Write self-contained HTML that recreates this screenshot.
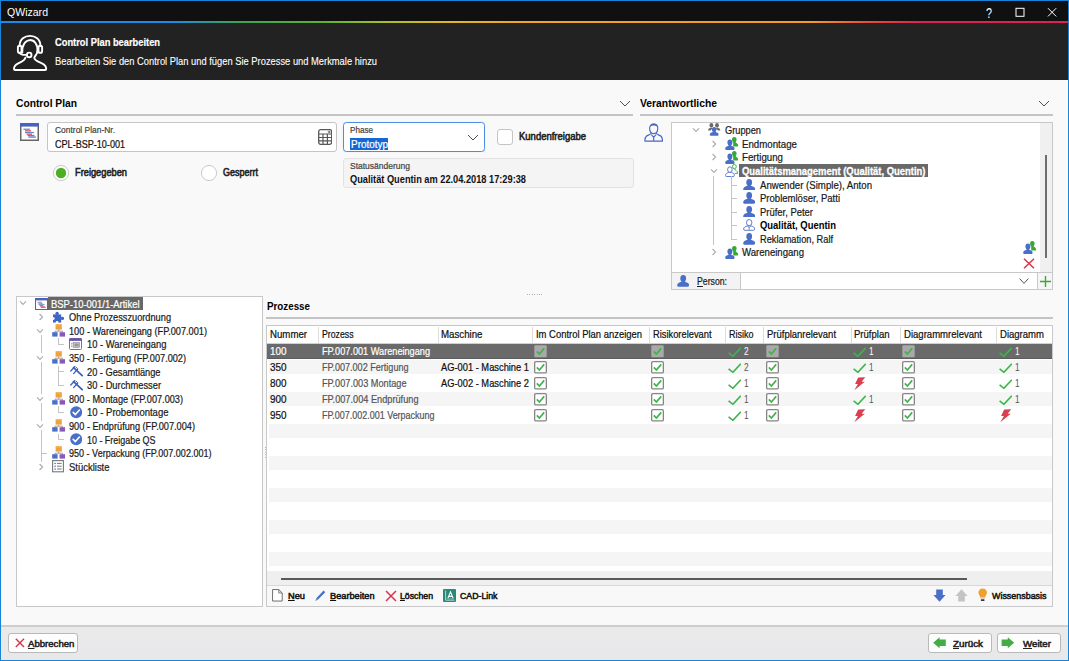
<!DOCTYPE html>
<html><head><meta charset="utf-8"><title>QWizard</title>
<style>
html,body{margin:0;padding:0;}
body{width:1069px;height:661px;overflow:hidden;position:relative;background:#f9f9f9;font-family:"Liberation Sans",sans-serif;}
.a{position:absolute;display:block;}
.t{position:absolute;display:block;white-space:nowrap;line-height:16px;height:16px;transform-origin:0 50%;}
.t u{text-decoration:underline;text-underline-offset:0.5px;text-decoration-thickness:1px;}
</style></head><body>
<div class="a" style="left:0px;top:0px;width:1069px;height:661px;background:#1883d7;"></div>
<div class="a" style="left:1px;top:1px;width:1066.8px;height:21px;background:#101010;"></div>
<div class="a" style="left:1px;top:21px;width:1066.8px;height:2px;background:linear-gradient(90deg,#1e8ae6 0%,#1e8ae6 16%,#3aa35a 22%,#5fb030 30%,#a8bf2a 36%,#e0b628 42%,#f2a32a 50%,#f29a2c 76%,#e8503a 81%,#dc2450 86%,#dc2450 100%);"></div>
<div class="a" style="left:1px;top:23px;width:1066.8px;height:57px;background:#222222;"></div>
<div class="a" style="left:1px;top:80px;width:1066.8px;height:546px;background:#f9f9f9;"></div>
<div class="a" style="left:1px;top:625.3px;width:1066.8px;height:1.7px;background:#cecece;"></div>
<div class="a" style="left:1px;top:627px;width:1066.8px;height:32.7px;background:linear-gradient(#eaeaea,#e8e8ea);"></div>
<span class="t" style="left:7px;top:3.50px;font-size:11.3px;color:#ffffff;transform:scaleX(0.9330);">QWizard</span>
<span class="t" style="left:985.6px;top:4.60px;font-size:15px;color:#ffffff;transform:scaleX(0.7193);">?</span>
<svg class="a" style="left:1015px;top:7px;" width="10" height="10" viewBox="0 0 10 10" preserveAspectRatio="none"><rect x="1" y="1.3" width="8" height="8" fill="none" stroke="#fff" stroke-width="1"/></svg>
<svg class="a" style="left:1047px;top:7px;" width="10" height="10" viewBox="0 0 10 10" preserveAspectRatio="none"><path d="M1 1.2L9.2 9.4M9.2 1.2L1 9.4" stroke="#fff" stroke-width="1" fill="none"/></svg>
<svg class="a" style="left:5px;top:28px;" width="50" height="50" viewBox="0 0 50 50" preserveAspectRatio="none"><g fill="none" stroke="#fff" stroke-width="1.9" stroke-linecap="round" stroke-linejoin="round">
<path d="M14.6 17.8 C14.6 4.5 35.4 4.5 35.4 17.8"/>
<rect x="12.9" y="17.8" width="3.6" height="7" rx="1.6"/>
<rect x="33.5" y="17.8" width="3.6" height="7" rx="1.6"/>
<path d="M17.3 24.6 C16.4 8 33.6 8 32.6 24"/>
<path d="M15 25 C15.6 27 18 27 21.6 26.9"/>
<circle cx="24.2" cy="26.9" r="2.3"/>
<path d="M32.6 22.5 C32.6 26 30 27.5 29.3 29.8 C29.6 32.5 33 33.6 37 35.4 C40 36.8 41.2 38.5 41.2 41 C41.2 41.7 40.8 42 40 42 L10.2 42 C9.4 42 9 41.7 9 41 C9 38.5 10.2 36.8 13.2 35.4 C17 33.6 20 32.5 20.4 29.6"/>
</g></svg>
<span class="t" style="left:55px;top:34.00px;font-size:10.5px;font-weight:700;color:#ffffff;transform:scaleX(0.8866);-webkit-text-stroke:0.2px #ffffff;">Control Plan bearbeiten</span>
<span class="t" style="left:55px;top:53.00px;font-size:10.5px;color:#ffffff;transform:scaleX(0.8898);-webkit-text-stroke:0.1px #ffffff;">Bearbeiten Sie den Control Plan und fügen Sie Prozesse und Merkmale hinzu</span>
<span class="t" style="left:16px;top:95.00px;font-size:11px;font-weight:700;color:#000;transform:scaleX(0.9329);">Control Plan</span>
<div class="a" style="left:16px;top:114px;width:617px;height:1.5px;background:#c4c4c4;"></div>
<svg class="a" style="left:619px;top:100px;" width="12" height="7" viewBox="0 0 12 7" preserveAspectRatio="none"><path d="M1 1L6 6L11 1" fill="none" stroke="#505050" stroke-width="1"/></svg>
<svg class="a" style="left:20px;top:123px;" width="19" height="18" viewBox="0 0 19 18" preserveAspectRatio="none"><rect x="0" y="0" width="19" height="18" fill="#666"/><rect x="0" y="0" width="19" height="3.6" fill="#4463c9"/><rect x="1.5" y="3.6" width="16" height="12.9" fill="#fff"/>
<rect x="3.4" y="5.6" width="6.5" height="1.3" fill="#5b8fd8"/><rect x="5" y="7.2" width="6" height="1.3" fill="#e05060"/><rect x="5" y="8.9" width="9" height="1.3" fill="#5b8fd8"/><rect x="6.6" y="10.5" width="5.4" height="1.3" fill="#e05060"/><rect x="7.6" y="11.9" width="6.8" height="1.2" fill="#e05060"/><rect x="8.4" y="13.4" width="7.4" height="1.3" fill="#5b78c8"/></svg>
<div class="a" style="left:47px;top:122px;width:290px;height:30px;background:#fff;border:1px solid #c4c4c4;box-sizing:border-box;border-radius:3px;"></div>
<span class="t" style="left:55px;top:121.50px;font-size:9px;color:#444;transform:scaleX(0.9372);-webkit-text-stroke:0.22px #444;">Control Plan-Nr.</span>
<span class="t" style="left:55px;top:135.50px;font-size:10.5px;color:#111;transform:scaleX(0.8629);-webkit-text-stroke:0.22px #111;">CPL-BSP-10-001</span>
<svg class="a" style="left:318px;top:129px;" width="14.4" height="16" viewBox="0 0 14.4 16" preserveAspectRatio="none"><rect x="0.7" y="0.7" width="13" height="14.6" rx="2" fill="#fff" stroke="#585858" stroke-width="1.3"/><g stroke="#585858" stroke-width="1.2" fill="none"><path d="M0.7 5H13.7M0.7 8.5H13.7M0.7 11.9H13.7M5 5V15.3M9.4 5V15.3"/></g><path d="M9.8 3H12.6M11.2 1.7V4.3" stroke="#585858" stroke-width="0.9"/></svg>
<div class="a" style="left:343px;top:122px;width:142px;height:30px;background:#fff;border:1.2px solid #4a90e2;box-sizing:border-box;border-radius:3.5px;box-shadow:0 0 1px 0 #c0d8f4;"></div>
<span class="t" style="left:350px;top:121.50px;font-size:9px;color:#444;transform:scaleX(0.9013);-webkit-text-stroke:0.22px #444;">Phase</span>
<div class="a" style="left:350px;top:137.8px;width:38px;height:11.8px;background:#1467d6;"></div>
<span class="t" style="left:350.5px;top:136.00px;font-size:10.5px;color:#fff;transform:scaleX(0.9463);-webkit-text-stroke:0.22px #fff;">Prototyp</span>
<svg class="a" style="left:467px;top:134px;" width="12" height="7" viewBox="0 0 12 7" preserveAspectRatio="none"><path d="M1 1L6 6L11 1" fill="none" stroke="#505050" stroke-width="1"/></svg>
<div class="a" style="left:497px;top:129px;width:16px;height:16px;background:#fff;border:1px solid #c4c4c4;box-sizing:border-box;border-radius:3px;"></div>
<span class="t" style="left:518.5px;top:129.00px;font-size:10.3px;color:#222;transform:scaleX(0.9212);-webkit-text-stroke:0.57px #222;">Kundenfreigabe</span>
<svg class="a" style="left:52px;top:164px;" width="18" height="18" viewBox="0 0 18 18" preserveAspectRatio="none"><circle cx="9" cy="9" r="7.6" fill="#fff" stroke="#cacaca" stroke-width="1"/><circle cx="9" cy="9" r="5.2" fill="#4db024"/></svg>
<span class="t" style="left:74.5px;top:165.00px;font-size:10.3px;color:#222;transform:scaleX(0.8992);-webkit-text-stroke:0.57px #222;">Freigegeben</span>
<svg class="a" style="left:199.5px;top:164px;" width="18" height="18" viewBox="0 0 18 18" preserveAspectRatio="none"><circle cx="9" cy="9" r="7.6" fill="#fff" stroke="#cacaca" stroke-width="1"/></svg>
<span class="t" style="left:222.5px;top:165.00px;font-size:10.3px;color:#222;transform:scaleX(0.8736);-webkit-text-stroke:0.57px #222;">Gesperrt</span>
<div class="a" style="left:343px;top:158px;width:291px;height:30px;background:#f4f4f4;border:1px solid #e2e2e2;box-sizing:border-box;border-radius:3px;"></div>
<span class="t" style="left:350px;top:157.50px;font-size:9px;color:#444;transform:scaleX(0.9442);-webkit-text-stroke:0.22px #444;">Statusänderung</span>
<span class="t" style="left:350px;top:172.00px;font-size:10.3px;font-weight:700;color:#111;transform:scaleX(0.8964);">Qualität Quentin am 22.04.2018 17:29:38</span>
<span class="t" style="left:640px;top:95.00px;font-size:11px;font-weight:700;color:#000;transform:scaleX(0.9401);">Verantwortliche</span>
<div class="a" style="left:640px;top:114px;width:413px;height:1.5px;background:#c4c4c4;"></div>
<svg class="a" style="left:1038px;top:100px;" width="12" height="7" viewBox="0 0 12 7" preserveAspectRatio="none"><path d="M1 1L6 6L11 1" fill="none" stroke="#505050" stroke-width="1"/></svg>
<svg class="a" style="left:644px;top:121.6px;" width="19.4" height="21" viewBox="0 0 22 22" preserveAspectRatio="none"><g fill="none" stroke="#4a67c8" stroke-width="1.3" stroke-linejoin="round"><path d="M6.4 6.6C6.4 0.8 15.6 0.8 15.6 6.6C15.6 9.6 14 12.2 11 12.2C8 12.2 6.4 9.6 6.4 6.6Z"/><path d="M8.2 11.6 C7.6 13.4 4.6 13.6 2.8 14.8 C1.4 15.8 1 17.6 1 20 L21 20 C21 17.6 20.6 15.8 19.2 14.8 C17.4 13.6 14.4 13.4 13.8 11.6"/><path d="M8.4 13.2L11 16.2L13.6 13.2M11 16.2V20"/></g><path d="M6.8 4.6C7.6 0.6 14.4 0.6 15.2 4.6C12.6 3.4 9.4 3.4 6.8 4.6Z" fill="#4a67c8"/></svg>
<div class="a" style="left:671px;top:122px;width:382px;height:168px;background:#fff;border:1px solid #c8c8c8;box-sizing:border-box;"></div>
<div class="a" style="left:1040px;top:123px;width:12px;height:149px;background:#f0f0f0;"></div>
<div class="a" style="left:1045px;top:155px;width:2px;height:103px;background:#6e6e6e;"></div>
<svg class="a" style="left:692px;top:127.19999999999999px;" width="8" height="6" viewBox="0 0 8 6" preserveAspectRatio="none"><path d="M1 1.4L4 4.4L7 1.4" fill="none" stroke="#ababab" stroke-width="1.1"/></svg>
<svg class="a" style="left:708px;top:123.2px;" width="12.6" height="13" viewBox="0 0 12.6 13" preserveAspectRatio="none"><g fill="#6a6a6a"><ellipse cx="3.4" cy="2.3" rx="1.9" ry="2.2"/><ellipse cx="9" cy="2.3" rx="1.9" ry="2.2"/><path d="M0 7.4C0 5.4 1.6 5 3 4.4L4.6 5.2L2.4 7.6Z"/><path d="M12.4 7.4C12.4 5.4 10.8 5 9.4 4.4L7.8 5.2L10 7.6Z"/></g><g fill="#4a6fc8"><ellipse cx="6.2" cy="6.6" rx="2.3" ry="2.6"/><rect x="5" y="8" width="2.4" height="2.2"/><path d="M1.8 11.7C1.8 9.9 3.2 9.7 5 9.1L7.4 9.1C9.2 9.7 10.6 9.9 10.6 11.7C10.6 12.4 10.2 12.7 9.5 12.7L2.9 12.7C2.2 12.7 1.8 12.4 1.8 11.7Z"/></g></svg>
<span class="t" style="left:724.5px;top:122.20px;font-size:10.5px;color:#1a1a1a;transform:scaleX(0.8811);-webkit-text-stroke:0.22px #1a1a1a;">Gruppen</span>
<svg class="a" style="left:710.5px;top:139.78px;" width="6" height="8" viewBox="0 0 6 8" preserveAspectRatio="none"><path d="M1.6 1L4.6 4L1.6 7" fill="none" stroke="#ababab" stroke-width="1.1"/></svg>
<svg class="a" style="left:725px;top:136.98px;" width="13.5" height="13" viewBox="0 0 13.5 13" preserveAspectRatio="none"><g fill="#35a935"><ellipse cx="9.3" cy="2.7" rx="2.3" ry="2.6"/><path d="M8.2 4.6L10.4 4.6C10.6 6.4 13.2 6.4 13.2 8.6C13.2 9.3 12.8 9.6 12.2 9.6L8.2 9.6Z"/></g><g fill="#4a6fc8"><ellipse cx="4.9" cy="5.4" rx="2.5" ry="3"/><rect x="3.6" y="7" width="2.6" height="2.4"/><path d="M0.2 11.8C0.2 9.7 1.8 9.4 3.6 8.7L6.2 8.7C8 9.4 9.6 9.7 9.6 11.8C9.6 12.6 9.1 13 8.3 13L1.5 13C0.7 13 0.2 12.6 0.2 11.8Z"/></g></svg>
<span class="t" style="left:741.5px;top:135.78px;font-size:10.5px;color:#1a1a1a;transform:scaleX(0.9237);-webkit-text-stroke:0.22px #1a1a1a;">Endmontage</span>
<svg class="a" style="left:710.5px;top:153.35999999999999px;" width="6" height="8" viewBox="0 0 6 8" preserveAspectRatio="none"><path d="M1.6 1L4.6 4L1.6 7" fill="none" stroke="#ababab" stroke-width="1.1"/></svg>
<svg class="a" style="left:725px;top:150.55999999999997px;" width="13.5" height="13" viewBox="0 0 13.5 13" preserveAspectRatio="none"><g fill="#35a935"><ellipse cx="9.3" cy="2.7" rx="2.3" ry="2.6"/><path d="M8.2 4.6L10.4 4.6C10.6 6.4 13.2 6.4 13.2 8.6C13.2 9.3 12.8 9.6 12.2 9.6L8.2 9.6Z"/></g><g fill="#4a6fc8"><ellipse cx="4.9" cy="5.4" rx="2.5" ry="3"/><rect x="3.6" y="7" width="2.6" height="2.4"/><path d="M0.2 11.8C0.2 9.7 1.8 9.4 3.6 8.7L6.2 8.7C8 9.4 9.6 9.7 9.6 11.8C9.6 12.6 9.1 13 8.3 13L1.5 13C0.7 13 0.2 12.6 0.2 11.8Z"/></g></svg>
<span class="t" style="left:741.5px;top:149.36px;font-size:10.5px;color:#1a1a1a;transform:scaleX(0.9244);-webkit-text-stroke:0.22px #1a1a1a;">Fertigung</span>
<svg class="a" style="left:709.5px;top:167.94px;" width="8" height="6" viewBox="0 0 8 6" preserveAspectRatio="none"><path d="M1 1.4L4 4.4L7 1.4" fill="none" stroke="#ababab" stroke-width="1.1"/></svg>
<svg class="a" style="left:725px;top:164.14px;" width="13.5" height="13" viewBox="0 0 13.5 13" preserveAspectRatio="none"><g fill="#fff" stroke-width="0.9" stroke-linejoin="round"><g stroke="#35a935"><ellipse cx="9.4" cy="2.6" rx="1.9" ry="2.1"/><path d="M9.6 4.8C10 6.6 12.6 6.4 12.6 9.4L9.6 9.4"/></g><g stroke="#4a6fc8"><path d="M0.5 11.6C0.5 9.6 1.6 9.2 3.4 8.4L6.4 8.4C8.2 9.2 9.3 9.6 9.3 11.6C9.3 12.3 8.9 12.5 8.3 12.5L1.5 12.5C0.9 12.5 0.5 12.3 0.5 11.6Z"/><ellipse cx="4.9" cy="5.6" rx="2.3" ry="2.8"/></g></g></svg>
<div class="a" style="left:738.5px;top:164px;width:189px;height:12.8px;background:#686868;"></div>
<span class="t" style="left:741.5px;top:162.94px;font-size:10.5px;font-weight:700;color:#fff;transform:scaleX(0.8987);-webkit-text-stroke:0.3px #fff;">Qualitätsmanagement (Qualität, Quentin)</span>
<div class="a" style="left:713px;top:176px;width:1px;height:69px;background:#c4c4c4;"></div>
<div class="a" style="left:731px;top:176px;width:1px;height:63px;background:#c4c4c4;"></div>
<div class="a" style="left:731px;top:185px;width:6px;height:1px;background:#c4c4c4;"></div>
<svg class="a" style="left:743px;top:178.51999999999998px;" width="12.4" height="11.8" viewBox="0 0 12.4 11.8" preserveAspectRatio="none"><g fill="#4a6fc8"><ellipse cx="6.2" cy="3.4" rx="2.9" ry="3.4"/><rect x="4.6" y="5" width="3.2" height="3"/><path d="M0.2 10.3C0.2 7.9 2.2 7.5 4.6 6.7L7.8 6.7C10.2 7.5 12.2 7.9 12.2 10.3C12.2 11.3 11.5 11.8 10.5 11.8L1.9 11.8C0.9 11.8 0.2 11.3 0.2 10.3Z"/></g></svg>
<span class="t" style="left:759.5px;top:176.52px;font-size:10.5px;color:#1a1a1a;transform:scaleX(0.9182);-webkit-text-stroke:0.22px #1a1a1a;">Anwender (Simple), Anton</span>
<div class="a" style="left:731px;top:198px;width:6px;height:1px;background:#c4c4c4;"></div>
<svg class="a" style="left:743px;top:192.1px;" width="12.4" height="11.8" viewBox="0 0 12.4 11.8" preserveAspectRatio="none"><g fill="#4a6fc8"><ellipse cx="6.2" cy="3.4" rx="2.9" ry="3.4"/><rect x="4.6" y="5" width="3.2" height="3"/><path d="M0.2 10.3C0.2 7.9 2.2 7.5 4.6 6.7L7.8 6.7C10.2 7.5 12.2 7.9 12.2 10.3C12.2 11.3 11.5 11.8 10.5 11.8L1.9 11.8C0.9 11.8 0.2 11.3 0.2 10.3Z"/></g></svg>
<span class="t" style="left:759.5px;top:190.10px;font-size:10.5px;color:#1a1a1a;transform:scaleX(0.9079);-webkit-text-stroke:0.22px #1a1a1a;">Problemlöser, Patti</span>
<div class="a" style="left:731px;top:212px;width:6px;height:1px;background:#c4c4c4;"></div>
<svg class="a" style="left:743px;top:205.68px;" width="12.4" height="11.8" viewBox="0 0 12.4 11.8" preserveAspectRatio="none"><g fill="#4a6fc8"><ellipse cx="6.2" cy="3.4" rx="2.9" ry="3.4"/><rect x="4.6" y="5" width="3.2" height="3"/><path d="M0.2 10.3C0.2 7.9 2.2 7.5 4.6 6.7L7.8 6.7C10.2 7.5 12.2 7.9 12.2 10.3C12.2 11.3 11.5 11.8 10.5 11.8L1.9 11.8C0.9 11.8 0.2 11.3 0.2 10.3Z"/></g></svg>
<span class="t" style="left:759.5px;top:203.68px;font-size:10.5px;color:#1a1a1a;transform:scaleX(0.8992);-webkit-text-stroke:0.22px #1a1a1a;">Prüfer, Peter</span>
<div class="a" style="left:731px;top:225px;width:6px;height:1px;background:#c4c4c4;"></div>
<svg class="a" style="left:743px;top:219.26px;" width="12.4" height="11.8" viewBox="0 0 12.4 11.8" preserveAspectRatio="none"><g fill="#fff" stroke="#4a6fc8" stroke-width="0.9" stroke-linejoin="round"><path d="M0.6 10.2C0.6 8 2.4 7.6 4.6 6.8L7.8 6.8C10 7.6 11.8 8 11.8 10.2C11.8 11 11.2 11.3 10.4 11.3L2 11.3C1.2 11.3 0.6 11 0.6 10.2Z"/><ellipse cx="6.2" cy="3.6" rx="2.7" ry="3.1"/><path d="M4.8 7L6.2 9L7.6 7M6.2 9V11.2" fill="none" stroke-width="0.7"/></g></svg>
<span class="t" style="left:759.5px;top:217.26px;font-size:10.5px;font-weight:700;color:#000;transform:scaleX(0.8986);">Qualität, Quentin</span>
<div class="a" style="left:731px;top:239px;width:6px;height:1px;background:#c4c4c4;"></div>
<svg class="a" style="left:743px;top:232.83999999999997px;" width="12.4" height="11.8" viewBox="0 0 12.4 11.8" preserveAspectRatio="none"><g fill="#4a6fc8"><ellipse cx="6.2" cy="3.4" rx="2.9" ry="3.4"/><rect x="4.6" y="5" width="3.2" height="3"/><path d="M0.2 10.3C0.2 7.9 2.2 7.5 4.6 6.7L7.8 6.7C10.2 7.5 12.2 7.9 12.2 10.3C12.2 11.3 11.5 11.8 10.5 11.8L1.9 11.8C0.9 11.8 0.2 11.3 0.2 10.3Z"/></g></svg>
<span class="t" style="left:759.5px;top:230.84px;font-size:10.5px;color:#1a1a1a;transform:scaleX(0.8810);-webkit-text-stroke:0.22px #1a1a1a;">Reklamation, Ralf</span>
<svg class="a" style="left:710.5px;top:248.42px;" width="6" height="8" viewBox="0 0 6 8" preserveAspectRatio="none"><path d="M1.6 1L4.6 4L1.6 7" fill="none" stroke="#ababab" stroke-width="1.1"/></svg>
<svg class="a" style="left:725px;top:245.61999999999998px;" width="13.5" height="13" viewBox="0 0 13.5 13" preserveAspectRatio="none"><g fill="#35a935"><ellipse cx="9.3" cy="2.7" rx="2.3" ry="2.6"/><path d="M8.2 4.6L10.4 4.6C10.6 6.4 13.2 6.4 13.2 8.6C13.2 9.3 12.8 9.6 12.2 9.6L8.2 9.6Z"/></g><g fill="#4a6fc8"><ellipse cx="4.9" cy="5.4" rx="2.5" ry="3"/><rect x="3.6" y="7" width="2.6" height="2.4"/><path d="M0.2 11.8C0.2 9.7 1.8 9.4 3.6 8.7L6.2 8.7C8 9.4 9.6 9.7 9.6 11.8C9.6 12.6 9.1 13 8.3 13L1.5 13C0.7 13 0.2 12.6 0.2 11.8Z"/></g></svg>
<span class="t" style="left:741.5px;top:244.42px;font-size:10.5px;color:#1a1a1a;transform:scaleX(0.9131);-webkit-text-stroke:0.22px #1a1a1a;">Wareneingang</span>
<svg class="a" style="left:1022.5px;top:241px;" width="13.5" height="13" viewBox="0 0 13.5 13" preserveAspectRatio="none"><g fill="#35a935"><ellipse cx="9.3" cy="2.7" rx="2.3" ry="2.6"/><path d="M8.2 4.6L10.4 4.6C10.6 6.4 13.2 6.4 13.2 8.6C13.2 9.3 12.8 9.6 12.2 9.6L8.2 9.6Z"/></g><g fill="#4a6fc8"><ellipse cx="4.9" cy="5.4" rx="2.5" ry="3"/><rect x="3.6" y="7" width="2.6" height="2.4"/><path d="M0.2 11.8C0.2 9.7 1.8 9.4 3.6 8.7L6.2 8.7C8 9.4 9.6 9.7 9.6 11.8C9.6 12.6 9.1 13 8.3 13L1.5 13C0.7 13 0.2 12.6 0.2 11.8Z"/></g></svg>
<svg class="a" style="left:1023px;top:258px;" width="12" height="11" viewBox="0 0 12 11" preserveAspectRatio="none"><path d="M1 0.8L11 10.2M11 0.8L1 10.2" stroke="#d8344a" stroke-width="1.5" fill="none"/></svg>
<div class="a" style="left:672px;top:272px;width:380px;height:1px;background:#c8c8c8;"></div>
<div class="a" style="left:672px;top:273px;width:68px;height:16px;background:#f3f3f3;"></div>
<div class="a" style="left:740px;top:273px;width:1px;height:16px;background:#c8c8c8;"></div>
<div class="a" style="left:1037px;top:273px;width:1px;height:16px;background:#c8c8c8;"></div>
<div class="a" style="left:1038px;top:273px;width:14px;height:16px;background:#f6f6f6;"></div>
<svg class="a" style="left:677px;top:274.8px;" width="12.4" height="11.8" viewBox="0 0 12.4 11.8" preserveAspectRatio="none"><g fill="#4a6fc8"><ellipse cx="6.2" cy="3.4" rx="2.9" ry="3.4"/><rect x="4.6" y="5" width="3.2" height="3"/><path d="M0.2 10.3C0.2 7.9 2.2 7.5 4.6 6.7L7.8 6.7C10.2 7.5 12.2 7.9 12.2 10.3C12.2 11.3 11.5 11.8 10.5 11.8L1.9 11.8C0.9 11.8 0.2 11.3 0.2 10.3Z"/></g></svg>
<span class="t" style="left:696.5px;top:273.00px;font-size:10.5px;color:#1a1a1a;transform:scaleX(0.8291);-webkit-text-stroke:0.22px #1a1a1a;"><u>P</u>erson:</span>
<svg class="a" style="left:1019px;top:277.6px;" width="10" height="6.4" viewBox="0 0 10 6.4" preserveAspectRatio="none"><path d="M0.6 0.6L5 5.4L9.4 0.6" fill="none" stroke="#505050" stroke-width="1"/></svg>
<svg class="a" style="left:1039px;top:275px;" width="13" height="13" viewBox="0 0 13 13" preserveAspectRatio="none"><path d="M6.5 1V12M1 6.5H12" stroke="#3aa83a" stroke-width="1.4" fill="none"/></svg>
<div class="a" style="left:527.0px;top:294px;width:1px;height:1px;background:#b0b0b0;"></div>
<div class="a" style="left:529.4px;top:294px;width:1px;height:1px;background:#b0b0b0;"></div>
<div class="a" style="left:531.8px;top:294px;width:1px;height:1px;background:#b0b0b0;"></div>
<div class="a" style="left:534.2px;top:294px;width:1px;height:1px;background:#b0b0b0;"></div>
<div class="a" style="left:536.6px;top:294px;width:1px;height:1px;background:#b0b0b0;"></div>
<div class="a" style="left:539.0px;top:294px;width:1px;height:1px;background:#b0b0b0;"></div>
<div class="a" style="left:541.4px;top:294px;width:1px;height:1px;background:#b0b0b0;"></div>
<div class="a" style="left:16px;top:296px;width:247px;height:311px;background:#fff;border:1px solid #c8c8c8;box-sizing:border-box;"></div>
<svg class="a" style="left:19.2px;top:300.20000000000005px;" width="8" height="6" viewBox="0 0 8 6" preserveAspectRatio="none"><path d="M1 1.4L4 4.4L7 1.4" fill="none" stroke="#ababab" stroke-width="1.1"/></svg>
<svg class="a" style="left:34.5px;top:297.8px;" width="13" height="12" viewBox="0 0 19 18" preserveAspectRatio="none"><rect x="0" y="0" width="19" height="18" fill="#666"/><rect x="0" y="0" width="19" height="3.6" fill="#4463c9"/><rect x="1.5" y="3.6" width="16" height="12.9" fill="#fff"/>
<rect x="3.4" y="5.6" width="6.5" height="1.3" fill="#5b8fd8"/><rect x="5" y="7.2" width="6" height="1.3" fill="#e05060"/><rect x="5" y="8.9" width="9" height="1.3" fill="#5b8fd8"/><rect x="6.6" y="10.5" width="5.4" height="1.3" fill="#e05060"/><rect x="7.6" y="11.9" width="6.8" height="1.2" fill="#e05060"/><rect x="8.4" y="13.4" width="7.4" height="1.3" fill="#5b78c8"/></svg>
<div class="a" style="left:47.5px;top:297px;width:95.5px;height:12.6px;background:#686868;"></div>
<span class="t" style="left:51px;top:295.60px;font-size:10.5px;color:#fff;transform:scaleX(0.8974);-webkit-text-stroke:0.22px #fff;">BSP-10-001/1-Artikel</span>
<div class="a" style="left:41px;top:335px;width:1px;height:18px;background:#c4c4c4;"></div>
<div class="a" style="left:41px;top:362px;width:1px;height:32px;background:#c4c4c4;"></div>
<div class="a" style="left:41px;top:403px;width:1px;height:18px;background:#c4c4c4;"></div>
<div class="a" style="left:41px;top:430px;width:1px;height:32px;background:#c4c4c4;"></div>
<div class="a" style="left:41px;top:453px;width:6px;height:1px;background:#c4c4c4;"></div>
<div class="a" style="left:58px;top:338px;width:1px;height:7px;background:#c4c4c4;"></div>
<div class="a" style="left:58px;top:344px;width:6px;height:1px;background:#c4c4c4;"></div>
<div class="a" style="left:58px;top:366px;width:1px;height:20px;background:#c4c4c4;"></div>
<div class="a" style="left:58px;top:371px;width:6px;height:1px;background:#c4c4c4;"></div>
<div class="a" style="left:58px;top:385px;width:6px;height:1px;background:#c4c4c4;"></div>
<div class="a" style="left:58px;top:406px;width:1px;height:7px;background:#c4c4c4;"></div>
<div class="a" style="left:58px;top:412px;width:6px;height:1px;background:#c4c4c4;"></div>
<div class="a" style="left:58px;top:434px;width:1px;height:6px;background:#c4c4c4;"></div>
<div class="a" style="left:58px;top:439px;width:6px;height:1px;background:#c4c4c4;"></div>
<svg class="a" style="left:37.6px;top:313.19px;" width="6" height="8" viewBox="0 0 6 8" preserveAspectRatio="none"><path d="M1.6 1L4.6 4L1.6 7" fill="none" stroke="#ababab" stroke-width="1.1"/></svg>
<svg class="a" style="left:52px;top:310.79px;" width="12.4" height="12.4" viewBox="0 0 12.4 12.4" preserveAspectRatio="none"><g fill="#3f66c6"><rect x="1" y="3.4" width="8.2" height="8.2"/><circle cx="5.1" cy="2.4" r="1.7"/><circle cx="10.4" cy="7.4" r="1.7"/></g><circle cx="1.2" cy="7.6" r="1.5" fill="#fff"/><circle cx="5.1" cy="11.4" r="1.4" fill="#fff"/></svg>
<span class="t" style="left:69px;top:309.19px;font-size:10.5px;color:#1a1a1a;transform:scaleX(0.8782);-webkit-text-stroke:0.22px #1a1a1a;">Ohne Prozesszuordnung</span>
<svg class="a" style="left:36.4px;top:327.98px;" width="8" height="6" viewBox="0 0 8 6" preserveAspectRatio="none"><path d="M1 1.4L4 4.4L7 1.4" fill="none" stroke="#ababab" stroke-width="1.1"/></svg>
<svg class="a" style="left:51.8px;top:323.98px;" width="13.4" height="12.8" viewBox="0 0 13.4 12.8" preserveAspectRatio="none"><path d="M6.7 5.4V7.2M2.9 8.4V7.2H10.5V8.4" fill="none" stroke="#8a8a8a" stroke-width="0.8"/><rect x="3.6" y="0.2" width="6.2" height="5.4" fill="#f0a03c"/><rect x="4.4" y="0.2" width="4.6" height="1.2" fill="#f5b860"/><rect x="0.2" y="8.2" width="5.4" height="4.4" fill="#4a6fc8"/><rect x="7.6" y="8.2" width="5.6" height="4.4" fill="#8a58b8"/></svg>
<span class="t" style="left:69px;top:322.78px;font-size:10.5px;color:#1a1a1a;transform:scaleX(0.8757);-webkit-text-stroke:0.22px #1a1a1a;">100 - Wareneingang (FP.007.001)</span>
<svg class="a" style="left:36.4px;top:355.16px;" width="8" height="6" viewBox="0 0 8 6" preserveAspectRatio="none"><path d="M1 1.4L4 4.4L7 1.4" fill="none" stroke="#ababab" stroke-width="1.1"/></svg>
<svg class="a" style="left:51.8px;top:351.16px;" width="13.4" height="12.8" viewBox="0 0 13.4 12.8" preserveAspectRatio="none"><path d="M6.7 5.4V7.2M2.9 8.4V7.2H10.5V8.4" fill="none" stroke="#8a8a8a" stroke-width="0.8"/><rect x="3.6" y="0.2" width="6.2" height="5.4" fill="#f0a03c"/><rect x="4.4" y="0.2" width="4.6" height="1.2" fill="#f5b860"/><rect x="0.2" y="8.2" width="5.4" height="4.4" fill="#4a6fc8"/><rect x="7.6" y="8.2" width="5.6" height="4.4" fill="#8a58b8"/></svg>
<span class="t" style="left:69px;top:349.96px;font-size:10.5px;color:#1a1a1a;transform:scaleX(0.8729);-webkit-text-stroke:0.22px #1a1a1a;">350 - Fertigung (FP.007.002)</span>
<svg class="a" style="left:36.4px;top:395.93px;" width="8" height="6" viewBox="0 0 8 6" preserveAspectRatio="none"><path d="M1 1.4L4 4.4L7 1.4" fill="none" stroke="#ababab" stroke-width="1.1"/></svg>
<svg class="a" style="left:51.8px;top:391.93px;" width="13.4" height="12.8" viewBox="0 0 13.4 12.8" preserveAspectRatio="none"><path d="M6.7 5.4V7.2M2.9 8.4V7.2H10.5V8.4" fill="none" stroke="#8a8a8a" stroke-width="0.8"/><rect x="3.6" y="0.2" width="6.2" height="5.4" fill="#f0a03c"/><rect x="4.4" y="0.2" width="4.6" height="1.2" fill="#f5b860"/><rect x="0.2" y="8.2" width="5.4" height="4.4" fill="#4a6fc8"/><rect x="7.6" y="8.2" width="5.6" height="4.4" fill="#8a58b8"/></svg>
<span class="t" style="left:69px;top:390.73px;font-size:10.5px;color:#1a1a1a;transform:scaleX(0.8733);-webkit-text-stroke:0.22px #1a1a1a;">800 - Montage (FP.007.003)</span>
<svg class="a" style="left:36.4px;top:423.11px;" width="8" height="6" viewBox="0 0 8 6" preserveAspectRatio="none"><path d="M1 1.4L4 4.4L7 1.4" fill="none" stroke="#ababab" stroke-width="1.1"/></svg>
<svg class="a" style="left:51.8px;top:419.11px;" width="13.4" height="12.8" viewBox="0 0 13.4 12.8" preserveAspectRatio="none"><path d="M6.7 5.4V7.2M2.9 8.4V7.2H10.5V8.4" fill="none" stroke="#8a8a8a" stroke-width="0.8"/><rect x="3.6" y="0.2" width="6.2" height="5.4" fill="#f0a03c"/><rect x="4.4" y="0.2" width="4.6" height="1.2" fill="#f5b860"/><rect x="0.2" y="8.2" width="5.4" height="4.4" fill="#4a6fc8"/><rect x="7.6" y="8.2" width="5.6" height="4.4" fill="#8a58b8"/></svg>
<span class="t" style="left:69px;top:417.91px;font-size:10.5px;color:#1a1a1a;transform:scaleX(0.8751);-webkit-text-stroke:0.22px #1a1a1a;">900 - Endprüfung (FP.007.004)</span>
<svg class="a" style="left:51.8px;top:446.29px;" width="13.4" height="12.8" viewBox="0 0 13.4 12.8" preserveAspectRatio="none"><path d="M6.7 5.4V7.2M2.9 8.4V7.2H10.5V8.4" fill="none" stroke="#8a8a8a" stroke-width="0.8"/><rect x="3.6" y="0.2" width="6.2" height="5.4" fill="#f0a03c"/><rect x="4.4" y="0.2" width="4.6" height="1.2" fill="#f5b860"/><rect x="0.2" y="8.2" width="5.4" height="4.4" fill="#4a6fc8"/><rect x="7.6" y="8.2" width="5.6" height="4.4" fill="#8a58b8"/></svg>
<span class="t" style="left:69px;top:445.09px;font-size:10.5px;color:#1a1a1a;transform:scaleX(0.8606);-webkit-text-stroke:0.22px #1a1a1a;">950 - Verpackung (FP.007.002.001)</span>
<svg class="a" style="left:69.4px;top:338.37px;" width="13" height="12" viewBox="0 0 13 12" preserveAspectRatio="none"><rect x="0.5" y="0.5" width="12" height="11" rx="1" fill="#fff" stroke="#777" stroke-width="1"/><rect x="0.3" y="0.3" width="12.4" height="2.6" fill="#6a4fb4"/><rect x="4.6" y="4.6" width="6" height="4.8" fill="#c8c8c8" stroke="#888" stroke-width="0.6"/><path d="M2.2 5.4H3.6M2.2 7H3.6M2.2 8.6H3.6M5.6 6.2H9.6M5.6 7.8H9.6" stroke="#666" stroke-width="0.7"/></svg>
<span class="t" style="left:87px;top:336.37px;font-size:10.5px;color:#1a1a1a;transform:scaleX(0.8942);-webkit-text-stroke:0.22px #1a1a1a;">10 - Wareneingang</span>
<svg class="a" style="left:69.6px;top:365.95px;" width="13" height="11" viewBox="0 0 13 11" preserveAspectRatio="none"><g fill="none" stroke="#3c60bc" stroke-linecap="round"><path d="M3.6 1.6L12.2 9.6" stroke-width="1.8"/><path d="M4.7 0.7L0.8 5" stroke-width="1.3"/><path d="M7.7 3L3.6 7.6" stroke-width="1.3"/><path d="M6 1.2L7.2 2.2" stroke-width="1"/></g></svg>
<span class="t" style="left:87px;top:363.55px;font-size:10.5px;color:#1a1a1a;transform:scaleX(0.8807);-webkit-text-stroke:0.22px #1a1a1a;">20 - Gesamtlänge</span>
<svg class="a" style="left:69.6px;top:379.53999999999996px;" width="13" height="11" viewBox="0 0 13 11" preserveAspectRatio="none"><g fill="none" stroke="#3c60bc" stroke-linecap="round"><path d="M3.6 1.6L12.2 9.6" stroke-width="1.8"/><path d="M4.7 0.7L0.8 5" stroke-width="1.3"/><path d="M7.7 3L3.6 7.6" stroke-width="1.3"/><path d="M6 1.2L7.2 2.2" stroke-width="1"/></g></svg>
<span class="t" style="left:87px;top:377.14px;font-size:10.5px;color:#1a1a1a;transform:scaleX(0.8869);-webkit-text-stroke:0.22px #1a1a1a;">30 - Durchmesser</span>
<svg class="a" style="left:70px;top:406.12000000000006px;" width="12.4" height="12.4" viewBox="0 0 12.4 12.4" preserveAspectRatio="none"><circle cx="6.2" cy="6.2" r="6" fill="#4a6fc8"/><path d="M3.2 6.4L5.4 8.6L9.4 4" fill="none" stroke="#fff" stroke-width="1.6" stroke-linecap="round" stroke-linejoin="round"/></svg>
<span class="t" style="left:87px;top:404.32px;font-size:10.5px;color:#1a1a1a;transform:scaleX(0.9067);-webkit-text-stroke:0.22px #1a1a1a;">10 - Probemontage</span>
<svg class="a" style="left:70px;top:433.3px;" width="12.4" height="12.4" viewBox="0 0 12.4 12.4" preserveAspectRatio="none"><circle cx="6.2" cy="6.2" r="6" fill="#4a6fc8"/><path d="M3.2 6.4L5.4 8.6L9.4 4" fill="none" stroke="#fff" stroke-width="1.6" stroke-linecap="round" stroke-linejoin="round"/></svg>
<span class="t" style="left:87px;top:431.50px;font-size:10.5px;color:#1a1a1a;transform:scaleX(0.8506);-webkit-text-stroke:0.22px #1a1a1a;">10 - Freigabe QS</span>
<svg class="a" style="left:37.6px;top:462.68px;" width="6" height="8" viewBox="0 0 6 8" preserveAspectRatio="none"><path d="M1.6 1L4.6 4L1.6 7" fill="none" stroke="#ababab" stroke-width="1.1"/></svg>
<svg class="a" style="left:52.2px;top:460.48px;" width="12" height="12.4" viewBox="0 0 12 12.4" preserveAspectRatio="none"><rect x="0.6" y="0.6" width="10.8" height="11.2" fill="#fff" stroke="#777" stroke-width="1.1"/><g fill="#4a6fc8"><rect x="2.4" y="2.8" width="1.4" height="1.3"/><rect x="2.4" y="5.6" width="1.4" height="1.3"/><rect x="2.4" y="8.4" width="1.4" height="1.3"/></g><path d="M5 3.4H9.6M5 6.2H9.6M5 9H9.6" stroke="#666" stroke-width="0.9"/></svg>
<span class="t" style="left:69px;top:458.68px;font-size:10.5px;color:#1a1a1a;transform:scaleX(0.9014);-webkit-text-stroke:0.22px #1a1a1a;">Stückliste</span>
<div class="a" style="left:264.5px;top:447.0px;width:1px;height:1px;background:#b8b8b8;"></div>
<div class="a" style="left:264.5px;top:449.4px;width:1px;height:1px;background:#b8b8b8;"></div>
<div class="a" style="left:264.5px;top:451.8px;width:1px;height:1px;background:#b8b8b8;"></div>
<div class="a" style="left:264.5px;top:454.2px;width:1px;height:1px;background:#b8b8b8;"></div>
<div class="a" style="left:264.5px;top:456.6px;width:1px;height:1px;background:#b8b8b8;"></div>
<span class="t" style="left:266.5px;top:298.00px;font-size:11px;font-weight:700;color:#000;transform:scaleX(0.8902);">Prozesse</span>
<div class="a" style="left:266px;top:317px;width:787px;height:1.5px;background:#c4c4c4;"></div>
<div class="a" style="left:266px;top:325px;width:787px;height:282px;background:#fff;border:1px solid #c8c8c8;box-sizing:border-box;"></div>
<div class="a" style="left:267px;top:326px;width:785px;height:17px;background:#fff;"></div>
<div class="a" style="left:268.5px;top:359.9px;width:783.5px;height:14.4px;background:#f5f5f5;"></div>
<div class="a" style="left:268.5px;top:391.9px;width:783.5px;height:14.4px;background:#f5f5f5;"></div>
<div class="a" style="left:268.5px;top:423.9px;width:783.5px;height:14.4px;background:#f5f5f5;"></div>
<div class="a" style="left:268.5px;top:455.9px;width:783.5px;height:14.4px;background:#f5f5f5;"></div>
<div class="a" style="left:268.5px;top:487.9px;width:783.5px;height:14.4px;background:#f5f5f5;"></div>
<div class="a" style="left:268.5px;top:519.9px;width:783.5px;height:14.4px;background:#f5f5f5;"></div>
<div class="a" style="left:268.5px;top:551.9px;width:783.5px;height:14.4px;background:#f5f5f5;"></div>
<div class="a" style="left:267px;top:343px;width:785px;height:16px;background:#6a6a6a;border-top:1px solid #5c5c5c;border-bottom:1px solid #5c5c5c;box-sizing:border-box;"></div>
<div class="a" style="left:267px;top:571px;width:785px;height:14px;background:#efefef;"></div>
<div class="a" style="left:281px;top:578px;width:686px;height:1.5px;background:#585858;"></div>
<div class="a" style="left:267px;top:585px;width:785px;height:1px;background:#d8d8d8;"></div>
<div class="a" style="left:267px;top:586px;width:785px;height:20px;background:#f8f8f8;"></div>
<div class="a" style="left:318px;top:327px;width:1px;height:16px;background:#dcdcdc;"></div>
<div class="a" style="left:438px;top:327px;width:1px;height:16px;background:#dcdcdc;"></div>
<div class="a" style="left:532px;top:327px;width:1px;height:16px;background:#dcdcdc;"></div>
<div class="a" style="left:649px;top:327px;width:1px;height:16px;background:#dcdcdc;"></div>
<div class="a" style="left:725px;top:327px;width:1px;height:16px;background:#dcdcdc;"></div>
<div class="a" style="left:763px;top:327px;width:1px;height:16px;background:#dcdcdc;"></div>
<div class="a" style="left:851px;top:327px;width:1px;height:16px;background:#dcdcdc;"></div>
<div class="a" style="left:900px;top:327px;width:1px;height:16px;background:#dcdcdc;"></div>
<div class="a" style="left:996px;top:327px;width:1px;height:16px;background:#dcdcdc;"></div>
<div class="a" style="left:267px;top:343px;width:785px;height:0.6px;background:#d0d0d0;"></div>
<span class="t" style="left:270px;top:326.30px;font-size:10.5px;color:#111;transform:scaleX(0.9193);-webkit-text-stroke:0.22px #111;">Nummer</span>
<span class="t" style="left:321.5px;top:326.30px;font-size:10.5px;color:#111;transform:scaleX(0.8305);-webkit-text-stroke:0.22px #111;">Prozess</span>
<span class="t" style="left:441px;top:326.30px;font-size:10.5px;color:#111;transform:scaleX(0.9236);-webkit-text-stroke:0.22px #111;">Maschine</span>
<span class="t" style="left:535.5px;top:326.30px;font-size:10.5px;color:#111;transform:scaleX(0.8991);-webkit-text-stroke:0.22px #111;">Im Control Plan anzeigen</span>
<span class="t" style="left:652.5px;top:326.30px;font-size:10.5px;color:#111;transform:scaleX(0.8872);-webkit-text-stroke:0.22px #111;">Risikorelevant</span>
<span class="t" style="left:728.5px;top:326.30px;font-size:10.5px;color:#111;transform:scaleX(0.8570);-webkit-text-stroke:0.22px #111;">Risiko</span>
<span class="t" style="left:767px;top:326.30px;font-size:10.5px;color:#111;transform:scaleX(0.9025);-webkit-text-stroke:0.22px #111;">Prüfplanrelevant</span>
<span class="t" style="left:854px;top:326.30px;font-size:10.5px;color:#111;transform:scaleX(0.9078);-webkit-text-stroke:0.22px #111;">Prüfplan</span>
<span class="t" style="left:903.5px;top:326.30px;font-size:10.5px;color:#111;transform:scaleX(0.9094);-webkit-text-stroke:0.22px #111;">Diagrammrelevant</span>
<span class="t" style="left:1000px;top:326.30px;font-size:10.5px;color:#111;transform:scaleX(0.9087);-webkit-text-stroke:0.22px #111;">Diagramm</span>
<span class="t" style="left:270px;top:343.20px;font-size:10.5px;color:#fff;transform:scaleX(0.9419);-webkit-text-stroke:0.22px #fff;">100</span>
<span class="t" style="left:321.5px;top:343.20px;font-size:10.5px;color:#fff;transform:scaleX(0.8727);-webkit-text-stroke:0.22px #fff;">FP.007.001 Wareneingang</span>
<svg class="a" style="left:534.2px;top:345.09999999999997px;" width="13" height="12.6" viewBox="0 0 13 12.6" preserveAspectRatio="none"><rect x="0.3" y="0.3" width="12.4" height="12" rx="1" fill="#a9a9a9"/><path d="M2.8 6.4L5.4 9L10.2 3.4" fill="none" stroke="#3db54a" stroke-width="1.7"/></svg>
<svg class="a" style="left:651.2px;top:345.09999999999997px;" width="13" height="12.6" viewBox="0 0 13 12.6" preserveAspectRatio="none"><rect x="0.3" y="0.3" width="12.4" height="12" rx="1" fill="#a9a9a9"/><path d="M2.8 6.4L5.4 9L10.2 3.4" fill="none" stroke="#3db54a" stroke-width="1.7"/></svg>
<svg class="a" style="left:765.8px;top:345.09999999999997px;" width="13" height="12.6" viewBox="0 0 13 12.6" preserveAspectRatio="none"><rect x="0.3" y="0.3" width="12.4" height="12" rx="1" fill="#a9a9a9"/><path d="M2.8 6.4L5.4 9L10.2 3.4" fill="none" stroke="#3db54a" stroke-width="1.7"/></svg>
<svg class="a" style="left:902.2px;top:345.09999999999997px;" width="13" height="12.6" viewBox="0 0 13 12.6" preserveAspectRatio="none"><rect x="0.3" y="0.3" width="12.4" height="12" rx="1" fill="#a9a9a9"/><path d="M2.8 6.4L5.4 9L10.2 3.4" fill="none" stroke="#3db54a" stroke-width="1.7"/></svg>
<svg class="a" style="left:728px;top:346.59999999999997px;" width="13.4" height="10.4" viewBox="0 0 13.4 10.4" preserveAspectRatio="none"><path d="M0.6 5.8L4.9 9.3L12.8 0.8" fill="none" stroke="#3db54a" stroke-width="1.6"/></svg>
<span class="t" style="left:744.2px;top:343.20px;font-size:10.5px;color:#fff;transform:scaleX(0.7878);">2</span>
<svg class="a" style="left:853px;top:346.59999999999997px;" width="13.4" height="10.4" viewBox="0 0 13.4 10.4" preserveAspectRatio="none"><path d="M0.6 5.8L4.9 9.3L12.8 0.8" fill="none" stroke="#3db54a" stroke-width="1.6"/></svg>
<span class="t" style="left:869.2px;top:343.20px;font-size:10.5px;color:#fff;transform:scaleX(0.7878);">1</span>
<svg class="a" style="left:999px;top:346.59999999999997px;" width="13.4" height="10.4" viewBox="0 0 13.4 10.4" preserveAspectRatio="none"><path d="M0.6 5.8L4.9 9.3L12.8 0.8" fill="none" stroke="#3db54a" stroke-width="1.6"/></svg>
<span class="t" style="left:1015.2px;top:343.20px;font-size:10.5px;color:#fff;transform:scaleX(0.7878);">1</span>
<span class="t" style="left:270px;top:359.20px;font-size:10.5px;color:#111;transform:scaleX(0.9419);-webkit-text-stroke:0.22px #111;">350</span>
<span class="t" style="left:321.5px;top:359.20px;font-size:10.5px;color:#555;transform:scaleX(0.8632);-webkit-text-stroke:0.22px #555;">FP.007.002 Fertigung</span>
<span class="t" style="left:441px;top:359.20px;font-size:10.5px;color:#111;transform:scaleX(0.8870);-webkit-text-stroke:0.22px #111;">AG-001 - Maschine 1</span>
<svg class="a" style="left:534.2px;top:361.09999999999997px;" width="13" height="12.6" viewBox="0 0 13 12.6" preserveAspectRatio="none"><rect x="0.65" y="0.65" width="11.7" height="11.3" rx="1.2" fill="#fff" stroke="#868686" stroke-width="1.3"/><path d="M2.8 6.4L5.4 9L10.2 3.4" fill="none" stroke="#3db54a" stroke-width="1.7"/></svg>
<svg class="a" style="left:651.2px;top:361.09999999999997px;" width="13" height="12.6" viewBox="0 0 13 12.6" preserveAspectRatio="none"><rect x="0.65" y="0.65" width="11.7" height="11.3" rx="1.2" fill="#fff" stroke="#868686" stroke-width="1.3"/><path d="M2.8 6.4L5.4 9L10.2 3.4" fill="none" stroke="#3db54a" stroke-width="1.7"/></svg>
<svg class="a" style="left:765.8px;top:361.09999999999997px;" width="13" height="12.6" viewBox="0 0 13 12.6" preserveAspectRatio="none"><rect x="0.65" y="0.65" width="11.7" height="11.3" rx="1.2" fill="#fff" stroke="#868686" stroke-width="1.3"/><path d="M2.8 6.4L5.4 9L10.2 3.4" fill="none" stroke="#3db54a" stroke-width="1.7"/></svg>
<svg class="a" style="left:902.2px;top:361.09999999999997px;" width="13" height="12.6" viewBox="0 0 13 12.6" preserveAspectRatio="none"><rect x="0.65" y="0.65" width="11.7" height="11.3" rx="1.2" fill="#fff" stroke="#868686" stroke-width="1.3"/><path d="M2.8 6.4L5.4 9L10.2 3.4" fill="none" stroke="#3db54a" stroke-width="1.7"/></svg>
<svg class="a" style="left:728px;top:362.59999999999997px;" width="13.4" height="10.4" viewBox="0 0 13.4 10.4" preserveAspectRatio="none"><path d="M0.6 5.8L4.9 9.3L12.8 0.8" fill="none" stroke="#3db54a" stroke-width="1.6"/></svg>
<span class="t" style="left:744.2px;top:359.20px;font-size:10.5px;color:#555;transform:scaleX(0.7878);">2</span>
<svg class="a" style="left:853px;top:362.59999999999997px;" width="13.4" height="10.4" viewBox="0 0 13.4 10.4" preserveAspectRatio="none"><path d="M0.6 5.8L4.9 9.3L12.8 0.8" fill="none" stroke="#3db54a" stroke-width="1.6"/></svg>
<span class="t" style="left:869.2px;top:359.20px;font-size:10.5px;color:#555;transform:scaleX(0.7878);">1</span>
<svg class="a" style="left:999px;top:362.59999999999997px;" width="13.4" height="10.4" viewBox="0 0 13.4 10.4" preserveAspectRatio="none"><path d="M0.6 5.8L4.9 9.3L12.8 0.8" fill="none" stroke="#3db54a" stroke-width="1.6"/></svg>
<span class="t" style="left:1015.2px;top:359.20px;font-size:10.5px;color:#555;transform:scaleX(0.7878);">1</span>
<span class="t" style="left:270px;top:375.20px;font-size:10.5px;color:#111;transform:scaleX(0.9419);-webkit-text-stroke:0.22px #111;">800</span>
<span class="t" style="left:321.5px;top:375.20px;font-size:10.5px;color:#555;transform:scaleX(0.8738);-webkit-text-stroke:0.22px #555;">FP.007.003 Montage</span>
<span class="t" style="left:441px;top:375.20px;font-size:10.5px;color:#111;transform:scaleX(0.8870);-webkit-text-stroke:0.22px #111;">AG-002 - Maschine 2</span>
<svg class="a" style="left:534.2px;top:377.09999999999997px;" width="13" height="12.6" viewBox="0 0 13 12.6" preserveAspectRatio="none"><rect x="0.65" y="0.65" width="11.7" height="11.3" rx="1.2" fill="#fff" stroke="#868686" stroke-width="1.3"/><path d="M2.8 6.4L5.4 9L10.2 3.4" fill="none" stroke="#3db54a" stroke-width="1.7"/></svg>
<svg class="a" style="left:651.2px;top:377.09999999999997px;" width="13" height="12.6" viewBox="0 0 13 12.6" preserveAspectRatio="none"><rect x="0.65" y="0.65" width="11.7" height="11.3" rx="1.2" fill="#fff" stroke="#868686" stroke-width="1.3"/><path d="M2.8 6.4L5.4 9L10.2 3.4" fill="none" stroke="#3db54a" stroke-width="1.7"/></svg>
<svg class="a" style="left:765.8px;top:377.09999999999997px;" width="13" height="12.6" viewBox="0 0 13 12.6" preserveAspectRatio="none"><rect x="0.65" y="0.65" width="11.7" height="11.3" rx="1.2" fill="#fff" stroke="#868686" stroke-width="1.3"/><path d="M2.8 6.4L5.4 9L10.2 3.4" fill="none" stroke="#3db54a" stroke-width="1.7"/></svg>
<svg class="a" style="left:902.2px;top:377.09999999999997px;" width="13" height="12.6" viewBox="0 0 13 12.6" preserveAspectRatio="none"><rect x="0.65" y="0.65" width="11.7" height="11.3" rx="1.2" fill="#fff" stroke="#868686" stroke-width="1.3"/><path d="M2.8 6.4L5.4 9L10.2 3.4" fill="none" stroke="#3db54a" stroke-width="1.7"/></svg>
<svg class="a" style="left:728px;top:378.59999999999997px;" width="13.4" height="10.4" viewBox="0 0 13.4 10.4" preserveAspectRatio="none"><path d="M0.6 5.8L4.9 9.3L12.8 0.8" fill="none" stroke="#3db54a" stroke-width="1.6"/></svg>
<span class="t" style="left:744.2px;top:375.20px;font-size:10.5px;color:#555;transform:scaleX(0.7878);">1</span>
<svg class="a" style="left:854.0px;top:376.9px;" width="11.8" height="13.8" viewBox="0 0 11 13" preserveAspectRatio="none"><polygon points="3.9,0.5 10.5,0.3 7.1,4.4 10,4.4 0.3,12.6 3.6,6.7 1,6.7" fill="#d9404f"/></svg>
<svg class="a" style="left:999px;top:378.59999999999997px;" width="13.4" height="10.4" viewBox="0 0 13.4 10.4" preserveAspectRatio="none"><path d="M0.6 5.8L4.9 9.3L12.8 0.8" fill="none" stroke="#3db54a" stroke-width="1.6"/></svg>
<span class="t" style="left:1015.2px;top:375.20px;font-size:10.5px;color:#555;transform:scaleX(0.7878);">1</span>
<span class="t" style="left:270px;top:391.20px;font-size:10.5px;color:#111;transform:scaleX(0.9419);-webkit-text-stroke:0.22px #111;">900</span>
<span class="t" style="left:321.5px;top:391.20px;font-size:10.5px;color:#555;transform:scaleX(0.8762);-webkit-text-stroke:0.22px #555;">FP.007.004 Endprüfung</span>
<svg class="a" style="left:534.2px;top:393.09999999999997px;" width="13" height="12.6" viewBox="0 0 13 12.6" preserveAspectRatio="none"><rect x="0.65" y="0.65" width="11.7" height="11.3" rx="1.2" fill="#fff" stroke="#868686" stroke-width="1.3"/><path d="M2.8 6.4L5.4 9L10.2 3.4" fill="none" stroke="#3db54a" stroke-width="1.7"/></svg>
<svg class="a" style="left:651.2px;top:393.09999999999997px;" width="13" height="12.6" viewBox="0 0 13 12.6" preserveAspectRatio="none"><rect x="0.65" y="0.65" width="11.7" height="11.3" rx="1.2" fill="#fff" stroke="#868686" stroke-width="1.3"/><path d="M2.8 6.4L5.4 9L10.2 3.4" fill="none" stroke="#3db54a" stroke-width="1.7"/></svg>
<svg class="a" style="left:765.8px;top:393.09999999999997px;" width="13" height="12.6" viewBox="0 0 13 12.6" preserveAspectRatio="none"><rect x="0.65" y="0.65" width="11.7" height="11.3" rx="1.2" fill="#fff" stroke="#868686" stroke-width="1.3"/><path d="M2.8 6.4L5.4 9L10.2 3.4" fill="none" stroke="#3db54a" stroke-width="1.7"/></svg>
<svg class="a" style="left:902.2px;top:393.09999999999997px;" width="13" height="12.6" viewBox="0 0 13 12.6" preserveAspectRatio="none"><rect x="0.65" y="0.65" width="11.7" height="11.3" rx="1.2" fill="#fff" stroke="#868686" stroke-width="1.3"/><path d="M2.8 6.4L5.4 9L10.2 3.4" fill="none" stroke="#3db54a" stroke-width="1.7"/></svg>
<svg class="a" style="left:728px;top:394.59999999999997px;" width="13.4" height="10.4" viewBox="0 0 13.4 10.4" preserveAspectRatio="none"><path d="M0.6 5.8L4.9 9.3L12.8 0.8" fill="none" stroke="#3db54a" stroke-width="1.6"/></svg>
<span class="t" style="left:744.2px;top:391.20px;font-size:10.5px;color:#555;transform:scaleX(0.7878);">1</span>
<svg class="a" style="left:853px;top:394.59999999999997px;" width="13.4" height="10.4" viewBox="0 0 13.4 10.4" preserveAspectRatio="none"><path d="M0.6 5.8L4.9 9.3L12.8 0.8" fill="none" stroke="#3db54a" stroke-width="1.6"/></svg>
<span class="t" style="left:869.2px;top:391.20px;font-size:10.5px;color:#555;transform:scaleX(0.7878);">1</span>
<svg class="a" style="left:999px;top:394.59999999999997px;" width="13.4" height="10.4" viewBox="0 0 13.4 10.4" preserveAspectRatio="none"><path d="M0.6 5.8L4.9 9.3L12.8 0.8" fill="none" stroke="#3db54a" stroke-width="1.6"/></svg>
<span class="t" style="left:1015.2px;top:391.20px;font-size:10.5px;color:#555;transform:scaleX(0.7878);">1</span>
<span class="t" style="left:270px;top:407.20px;font-size:10.5px;color:#111;transform:scaleX(0.9419);-webkit-text-stroke:0.22px #111;">950</span>
<span class="t" style="left:321.5px;top:407.20px;font-size:10.5px;color:#555;transform:scaleX(0.8540);-webkit-text-stroke:0.22px #555;">FP.007.002.001 Verpackung</span>
<svg class="a" style="left:534.2px;top:409.09999999999997px;" width="13" height="12.6" viewBox="0 0 13 12.6" preserveAspectRatio="none"><rect x="0.65" y="0.65" width="11.7" height="11.3" rx="1.2" fill="#fff" stroke="#868686" stroke-width="1.3"/><path d="M2.8 6.4L5.4 9L10.2 3.4" fill="none" stroke="#3db54a" stroke-width="1.7"/></svg>
<svg class="a" style="left:651.2px;top:409.09999999999997px;" width="13" height="12.6" viewBox="0 0 13 12.6" preserveAspectRatio="none"><rect x="0.65" y="0.65" width="11.7" height="11.3" rx="1.2" fill="#fff" stroke="#868686" stroke-width="1.3"/><path d="M2.8 6.4L5.4 9L10.2 3.4" fill="none" stroke="#3db54a" stroke-width="1.7"/></svg>
<svg class="a" style="left:765.8px;top:409.09999999999997px;" width="13" height="12.6" viewBox="0 0 13 12.6" preserveAspectRatio="none"><rect x="0.65" y="0.65" width="11.7" height="11.3" rx="1.2" fill="#fff" stroke="#868686" stroke-width="1.3"/><path d="M2.8 6.4L5.4 9L10.2 3.4" fill="none" stroke="#3db54a" stroke-width="1.7"/></svg>
<svg class="a" style="left:902.2px;top:409.09999999999997px;" width="13" height="12.6" viewBox="0 0 13 12.6" preserveAspectRatio="none"><rect x="0.65" y="0.65" width="11.7" height="11.3" rx="1.2" fill="#fff" stroke="#868686" stroke-width="1.3"/><path d="M2.8 6.4L5.4 9L10.2 3.4" fill="none" stroke="#3db54a" stroke-width="1.7"/></svg>
<svg class="a" style="left:728px;top:410.59999999999997px;" width="13.4" height="10.4" viewBox="0 0 13.4 10.4" preserveAspectRatio="none"><path d="M0.6 5.8L4.9 9.3L12.8 0.8" fill="none" stroke="#3db54a" stroke-width="1.6"/></svg>
<span class="t" style="left:744.2px;top:407.20px;font-size:10.5px;color:#555;transform:scaleX(0.7878);">1</span>
<svg class="a" style="left:854.0px;top:408.9px;" width="11.8" height="13.8" viewBox="0 0 11 13" preserveAspectRatio="none"><polygon points="3.9,0.5 10.5,0.3 7.1,4.4 10,4.4 0.3,12.6 3.6,6.7 1,6.7" fill="#d9404f"/></svg>
<svg class="a" style="left:1000.0px;top:408.9px;" width="11.8" height="13.8" viewBox="0 0 11 13" preserveAspectRatio="none"><polygon points="3.9,0.5 10.5,0.3 7.1,4.4 10,4.4 0.3,12.6 3.6,6.7 1,6.7" fill="#d9404f"/></svg>
<svg class="a" style="left:271.8px;top:589.3px;" width="10.8" height="12.6" viewBox="0 0 11.5 13.5" preserveAspectRatio="none"><path d="M0.6 0.6H7.2L10.9 4.3V12.9H0.6Z" fill="#fff" stroke="#666" stroke-width="1"/><path d="M7.2 0.6V4.3H10.9" fill="none" stroke="#666" stroke-width="0.9"/></svg>
<span class="t" style="left:287.5px;top:588.10px;font-size:9px;color:#111;transform:scaleX(1.0297);-webkit-text-stroke:0.49px #111;"><u>N</u>eu</span>
<svg class="a" style="left:314px;top:589px;" width="12.6" height="13" viewBox="0 0 12.6 13" preserveAspectRatio="none"><path d="M1.6 11.4L3 8.4L9.6 1.6L11.2 3.2L4.6 10Z" fill="#4a6fc8"/><path d="M1.2 12L2.6 9L4.2 10.6Z" fill="#7a8cc0"/></svg>
<span class="t" style="left:329.7px;top:588.10px;font-size:9px;color:#111;transform:scaleX(1.0223);-webkit-text-stroke:0.49px #111;"><u>B</u>earbeiten</span>
<svg class="a" style="left:384.6px;top:589.6px;" width="12" height="12" viewBox="0 0 12 12" preserveAspectRatio="none"><path d="M1 1L11 11M11 1L1 11" stroke="#d8344a" stroke-width="1.5" fill="none"/></svg>
<span class="t" style="left:400.3px;top:588.10px;font-size:9px;color:#111;transform:scaleX(0.9699);-webkit-text-stroke:0.49px #111;"><u>L</u>öschen</span>
<svg class="a" style="left:443px;top:589px;" width="13" height="13" viewBox="0 0 13 13" preserveAspectRatio="none"><rect width="13" height="13" rx="1" fill="#2a8a78"/><path d="M4.8 9.4L7.5 3L10.2 9.4M5.7 7.4H9.3" fill="none" stroke="#fff" stroke-width="1.1"/><path d="M2.6 1.6V11.2H11.4" fill="none" stroke="#bfe0d8" stroke-width="0.9"/><path d="M4.4 9.9H10.6" stroke="#9fd0c6" stroke-width="0.6"/></svg>
<span class="t" style="left:459.6px;top:588.10px;font-size:9px;color:#111;transform:scaleX(0.9738);-webkit-text-stroke:0.49px #111;">CAD-Link</span>
<svg class="a" style="left:933px;top:588.6px;" width="13" height="13" viewBox="0 0 13 13" preserveAspectRatio="none"><path d="M3.2 0.4H9.8V6H12.6L6.5 12.8L0.4 6H3.2Z" fill="#4a6fc8"/></svg>
<svg class="a" style="left:954.6px;top:588.6px;" width="13" height="13" viewBox="0 0 13 13" preserveAspectRatio="none"><path d="M3.2 12.6H9.8V7H12.6L6.5 0.2L0.4 7H3.2Z" fill="#c4c4c4"/></svg>
<svg class="a" style="left:977.5px;top:588.4px;" width="9.4" height="13.6" viewBox="0 0 9.4 13.6" preserveAspectRatio="none"><path d="M4.7 0.4C7.2 0.4 9 2.2 9 4.6C9 6.6 7.4 7.4 7.2 9.4H2.2C2 7.4 0.4 6.6 0.4 4.6C0.4 2.2 2.2 0.4 4.7 0.4Z" fill="#f0a030"/><rect x="2.4" y="9.8" width="4.6" height="1.2" fill="#d0d0d0"/><rect x="2.8" y="11.2" width="3.8" height="1.8" rx="0.8" fill="#333"/></svg>
<span class="t" style="left:992px;top:588.10px;font-size:9px;color:#111;transform:scaleX(0.9907);-webkit-text-stroke:0.49px #111;">Wissensbasis</span>
<div class="a" style="left:8px;top:633px;width:70px;height:20px;background:#fdfdfd;border:1px solid #b9b9b9;box-sizing:border-box;border-radius:3px;"></div>
<div class="a" style="left:928px;top:633px;width:64px;height:20px;background:#fdfdfd;border:1px solid #b9b9b9;box-sizing:border-box;border-radius:3px;"></div>
<div class="a" style="left:997px;top:633px;width:64px;height:20px;background:#fdfdfd;border:1px solid #b9b9b9;box-sizing:border-box;border-radius:3px;"></div>
<svg class="a" style="left:14.8px;top:638.2px;" width="9.8" height="9.8" viewBox="0 0 9.8 9.8" preserveAspectRatio="none"><path d="M0.8 0.8L9 9M9 0.8L0.8 9" stroke="#d8344a" stroke-width="1.4" fill="none"/></svg>
<span class="t" style="left:28px;top:635.70px;font-size:9.4px;color:#222;transform:scaleX(1.0228);-webkit-text-stroke:0.52px #222;"><u>A</u>bbrechen</span>
<svg class="a" style="left:933px;top:637.4px;" width="13.4" height="11.4" viewBox="0 0 13.4 11.4" preserveAspectRatio="none"><path d="M6.6 0.2V2.5H12.8V8.9H6.6V11.2L0.2 5.7Z" fill="#45ac45"/></svg>
<span class="t" style="left:952.8px;top:635.70px;font-size:9.4px;color:#222;transform:scaleX(1.0444);-webkit-text-stroke:0.52px #222;"><u>Z</u>urück</span>
<svg class="a" style="left:1001.4px;top:637.4px;" width="13.4" height="11.4" viewBox="0 0 13.4 11.4" preserveAspectRatio="none"><path d="M6.8 0.2V2.5H0.6V8.9H6.8V11.2L13.2 5.7Z" fill="#45ac45"/></svg>
<span class="t" style="left:1023px;top:635.70px;font-size:9.4px;color:#222;transform:scaleX(1.0375);-webkit-text-stroke:0.52px #222;"><u>W</u>eiter</span>
</body></html>
